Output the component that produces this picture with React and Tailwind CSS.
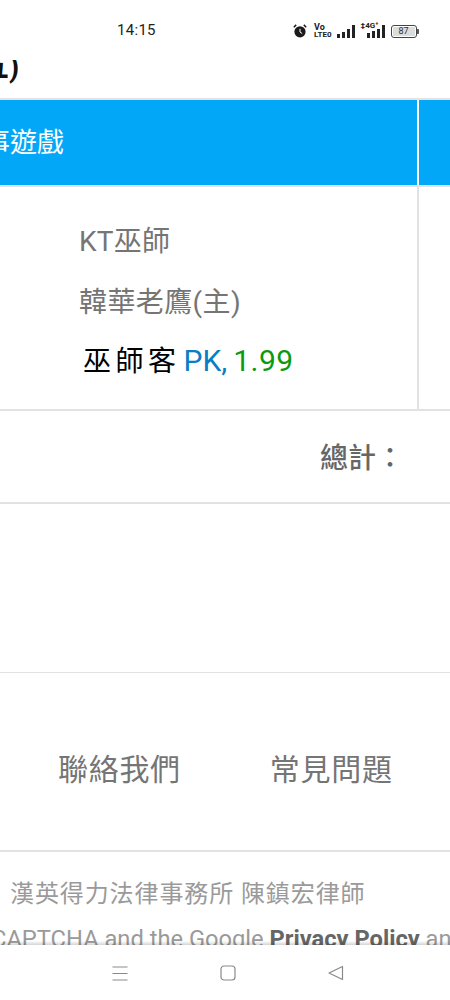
import React from 'react';

const cjk = { fontFamily: 'Roboto, "Noto Sans CJK TC", sans-serif' };

// status bar icons
const AlarmIcon = () => (
  <svg width="14" height="14" viewBox="0 0 14 14" className="text-[#1a1a1a]">
    <circle cx="7" cy="7.8" r="5.6" fill="currentColor" />
    <path d="M0.8 3.2 L3.2 0.9 M13.2 3.2 L10.8 0.9" stroke="currentColor" strokeWidth="1.5" />
    <path d="M7 4.8 V8 L9.2 9.6" stroke="#fff" strokeWidth="1" fill="none" />
  </svg>
);

const Bars = ({ heights }) => (
  <div className="flex items-end gap-[2px]">
    {heights.map((h, i) => (
      <div key={i} className="w-[3px] bg-[#222]" style={{ height: h }} />
    ))}
  </div>
);

const StatusBar = () => (
  <div className="relative h-[60px] shrink-0">
    <div className="absolute left-[117px] top-[21px] text-[15px] leading-[18px] tracking-[0.3px] text-[#222]">14:15</div>
    <div className="absolute left-[293px] top-[24px] flex items-center">
      <AlarmIcon />
      <div className="ml-[7px] flex flex-col items-start text-[9px] font-bold leading-[7px] text-[#222]">
        <span>Vo</span>
        <span className="text-[8px]">LTE0</span>
      </div>
      <div className="ml-[5px]"><Bars heights={[4, 6, 9, 13]} /></div>
      <div className="relative ml-[6px] h-[14px] w-[24px]">
        <span className="absolute left-[0px] top-[-2px] text-[8px] font-bold leading-[8px] text-[#222]">‡4G⁺</span>
        <div className="absolute bottom-0 right-0"><Bars heights={[5, 7, 9, 13]} /></div>
      </div>
      <div className="ml-[6px] flex h-[13px] w-[26px] items-center justify-center rounded-[3px] border border-[#444] p-[1px]">
        <div className="flex h-full w-full items-center justify-center rounded-[1px] bg-[#dcdcdc] text-[9px] leading-none text-[#333]">87</div>
      </div>
      <div className="h-[5px] w-[2px] rounded-r-[1px] bg-[#555]" />
    </div>
  </div>
);

const NavBar = () => (
  <div className="relative z-10 flex h-[55px] shrink-0 items-start justify-center gap-[92px] bg-white pt-[20px] pl-[5px] shadow-[0_-2px_3px_rgba(0,0,0,0.18)]">
    <svg width="16" height="16" viewBox="0 0 16 16" className="text-[#8a8a8a]">
      <path d="M0.5 2 H15.5 M0.5 8.5 H15.5 M0.5 15 H15.5" stroke="currentColor" strokeWidth="1" />
    </svg>
    <svg width="16" height="16" viewBox="0 0 16 16" className="text-[#8a8a8a]">
      <rect x="1" y="1" width="14" height="14" rx="3" fill="none" stroke="currentColor" strokeWidth="1.2" />
    </svg>
    <svg width="16" height="16" viewBox="0 0 16 16" className="text-[#8a8a8a]">
      <path d="M14.5 1.5 V14.5 L1 8 Z" fill="none" stroke="currentColor" strokeWidth="1.2" strokeLinejoin="round" />
    </svg>
  </div>
);

const App = () => {
  return (
    <div className="flex h-[1000px] w-[450px] flex-col overflow-hidden bg-white" style={cjk}>
      <StatusBar />
      <div className="min-h-0 flex-1 overflow-hidden">
        {/* page title, cut off by the left edge */}
        <div className="ml-[-20px] h-[38px] text-[29px] font-bold leading-[14px] text-[#111]">五)</div>

        {/* table */}
        <div className="border-y-2 border-[#e2e2e2]">
          <div className="flex h-[87px] border-b-2 border-[#e2e2e2] bg-[#02a8f7]">
            <div className="ml-[-17px] flex w-[436px] items-center border-r-2 border-white pt-[2px] text-[27px] text-white">事遊戲</div>
          </div>
          <div className="flex h-[222px]">
            <div className="w-[419px] border-r-2 border-[#e2e2e2] pl-[79px] pt-[34px]">
              <div className="text-[28px] leading-[42px] tracking-[0.2px] text-[#757575]">KT巫師</div>
              <div className="mt-[19px] text-[28px] leading-[42px] tracking-[0.4px] text-[#757575]">韓華老鷹(主)</div>
              <div className="mt-[16px] flex items-baseline text-[30px] leading-[42px]">
                <span className="ml-[4px] text-[28px] tracking-[4.5px] text-black">巫師客</span>
                <span className="ml-[3px] text-[#0b7dc4]">PK,</span>
                <span className="ml-[6px] text-[#0a9a10] tracking-[0.5px]">1.99</span>
              </div>
            </div>
          </div>
        </div>

        {/* total */}
        <div className="flex h-[93px] justify-end border-b-2 border-[#e2e2e2] pr-[46px] pt-[23px] text-[28px] font-medium leading-[50px] text-[#666]">
          總計：
        </div>

        <div className="h-[169px] border-b border-[#e2e2e2]" />

        {/* footer links */}
        <div className="flex h-[179px] items-start border-b-2 border-[#e2e2e2] pl-[58px] pt-[76px] text-[30px] leading-[42px] tracking-[0.7px] text-[#757575]">
          <span>聯絡我們</span>
          <span className="ml-[89px]">常見問題</span>
        </div>

        <div className="whitespace-nowrap pl-[10px] pt-[22px] text-[24px] leading-[40px] tracking-[0.9px] text-[#9a9a9a]">
          漢英得力法律事務所 陳鎮宏律師
        </div>
        <div className="ml-[-9px] mt-[9px] whitespace-nowrap text-[23.7px] leading-[32px] text-[#9a9a9a]">
          CAPTCHA and the Google <b className="text-[#666]">Privacy Policy</b> and
        </div>
      </div>
      <NavBar />
    </div>
  );
};

export default App;
